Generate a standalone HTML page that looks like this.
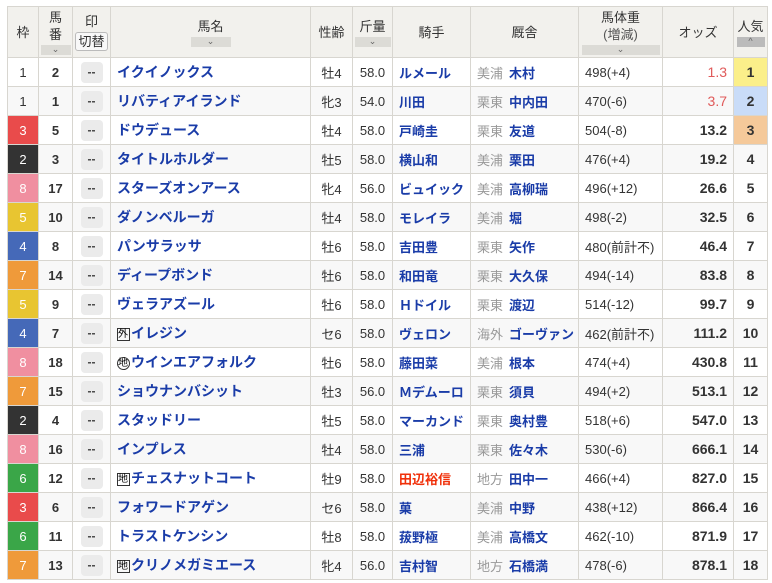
<!DOCTYPE html>
<html><head><meta charset="utf-8"><style>
body{margin:0;background:#fff;font-family:"Liberation Sans","Noto Sans CJK JP",sans-serif;}
table{position:absolute;left:7px;top:6px;border-collapse:collapse;table-layout:fixed;width:760px;font-size:13px;color:#333}
td,th{border:1px solid #d8d6d0;padding:0;height:28px;text-align:center;white-space:nowrap;overflow:hidden}
th{background:#f2f1ed;font-weight:normal;font-size:13px;height:50px;position:relative;line-height:17px}
.sort{display:block;margin:2px auto 0;height:10px;background:#dcdbd6;font-size:9px;line-height:9px;color:#666}
tr:nth-child(odd) td{background:#f8f8f8}
.w{font-weight:bold}
.mk{display:inline-block;width:22px;height:21px;background:#ebebeb;border-radius:4px;font-weight:bold;line-height:21px;font-size:12px;color:#444}
.nm{text-align:left;padding-left:6px;color:#1a3ca8;font-weight:bold;font-size:14px}
.jk{text-align:left;padding-left:6px;color:#1a3ca8;font-weight:bold}
.st{text-align:left;padding-left:6px}
.st span{color:#999;margin-right:6px}
.st b{color:#1a3ca8}
.wt{text-align:left;padding-left:6px}
.od{text-align:right;padding-right:6px;font-weight:bold;font-size:14px}
.pp{font-weight:bold;font-size:14px}
.ic{display:inline-block;border:1px solid #333;font-size:10px;line-height:11px;width:11px;color:#000;font-weight:normal;margin-right:1px;vertical-align:1px}
.ic.c{border-radius:50%}
</style></head><body>
<table>
<colgroup><col style="width:31px"><col style="width:34px"><col style="width:38px"><col style="width:200px"><col style="width:42px"><col style="width:40px"><col style="width:78px"><col style="width:108px"><col style="width:84px"><col style="width:71px"><col style="width:34px"></colgroup>
<tr><th>枠</th><th>馬<br>番<span class="sort" style="width:30px">⌄</span></th><th>印<br><span style="display:inline-block;border:1px solid #bbb;border-radius:3px;background:#f8f8f8;padding:0 2px;margin-top:2px">切替</span></th><th>馬名<span class="sort" style="width:40px">⌄</span></th><th>性齢</th><th>斤量<span class="sort" style="width:36px">⌄</span></th><th>騎手</th><th>厩舎</th><th>馬体重<br><span style="color:#555">(増減)</span><span class="sort" style="width:78px">⌄</span></th><th>オッズ</th><th>人気<span class="sort" style="width:28px;background:#bbb">^</span></th></tr>
<tr><td>1</td><td class="w">2</td><td><span class="mk">--</span></td><td class="nm">イクイノックス</td><td>牡4</td><td>58.0</td><td class="jk">ルメール</td><td class="st"><span>美浦</span><b>木村</b></td><td class="wt">498(+4)</td><td class="od" style="color:#e05a5a;font-weight:normal">1.3</td><td class="pp" style="background:#fbef8a">1</td></tr>
<tr><td>1</td><td class="w">1</td><td><span class="mk">--</span></td><td class="nm">リバティアイランド</td><td>牝3</td><td>54.0</td><td class="jk">川田</td><td class="st"><span>栗東</span><b>中内田</b></td><td class="wt">470(-6)</td><td class="od" style="color:#e05a5a;font-weight:normal">3.7</td><td class="pp" style="background:#c9dcf8">2</td></tr>
<tr><td style="background:#e94b4b;color:#fff">3</td><td class="w">5</td><td><span class="mk">--</span></td><td class="nm">ドウデュース</td><td>牡4</td><td>58.0</td><td class="jk">戸崎圭</td><td class="st"><span>栗東</span><b>友道</b></td><td class="wt">504(-8)</td><td class="od">13.2</td><td class="pp" style="background:#f5c99a">3</td></tr>
<tr><td style="background:#333;color:#fff">2</td><td class="w">3</td><td><span class="mk">--</span></td><td class="nm">タイトルホルダー</td><td>牡5</td><td>58.0</td><td class="jk">横山和</td><td class="st"><span>美浦</span><b>栗田</b></td><td class="wt">476(+4)</td><td class="od">19.2</td><td class="pp">4</td></tr>
<tr><td style="background:#f08fa0;color:#fff">8</td><td class="w">17</td><td><span class="mk">--</span></td><td class="nm">スターズオンアース</td><td>牝4</td><td>56.0</td><td class="jk">ビュイック</td><td class="st"><span>美浦</span><b>高柳瑞</b></td><td class="wt">496(+12)</td><td class="od">26.6</td><td class="pp">5</td></tr>
<tr><td style="background:#e8c531;color:#fff">5</td><td class="w">10</td><td><span class="mk">--</span></td><td class="nm">ダノンベルーガ</td><td>牡4</td><td>58.0</td><td class="jk">モレイラ</td><td class="st"><span>美浦</span><b>堀</b></td><td class="wt">498(-2)</td><td class="od">32.5</td><td class="pp">6</td></tr>
<tr><td style="background:#4569b8;color:#fff">4</td><td class="w">8</td><td><span class="mk">--</span></td><td class="nm">パンサラッサ</td><td>牡6</td><td>58.0</td><td class="jk">吉田豊</td><td class="st"><span>栗東</span><b>矢作</b></td><td class="wt">480(前計不)</td><td class="od">46.4</td><td class="pp">7</td></tr>
<tr><td style="background:#ef9a3a;color:#fff">7</td><td class="w">14</td><td><span class="mk">--</span></td><td class="nm">ディープボンド</td><td>牡6</td><td>58.0</td><td class="jk">和田竜</td><td class="st"><span>栗東</span><b>大久保</b></td><td class="wt">494(-14)</td><td class="od">83.8</td><td class="pp">8</td></tr>
<tr><td style="background:#e8c531;color:#fff">5</td><td class="w">9</td><td><span class="mk">--</span></td><td class="nm">ヴェラアズール</td><td>牡6</td><td>58.0</td><td class="jk">Ｈドイル</td><td class="st"><span>栗東</span><b>渡辺</b></td><td class="wt">514(-12)</td><td class="od">99.7</td><td class="pp">9</td></tr>
<tr><td style="background:#4569b8;color:#fff">4</td><td class="w">7</td><td><span class="mk">--</span></td><td class="nm"><span class="ic">外</span>イレジン</td><td>セ6</td><td>58.0</td><td class="jk">ヴェロン</td><td class="st"><span>海外</span><b>ゴーヴァン</b></td><td class="wt">462(前計不)</td><td class="od">111.2</td><td class="pp">10</td></tr>
<tr><td style="background:#f08fa0;color:#fff">8</td><td class="w">18</td><td><span class="mk">--</span></td><td class="nm"><span class="ic c">地</span>ウインエアフォルク</td><td>牡6</td><td>58.0</td><td class="jk">藤田菜</td><td class="st"><span>美浦</span><b>根本</b></td><td class="wt">474(+4)</td><td class="od">430.8</td><td class="pp">11</td></tr>
<tr><td style="background:#ef9a3a;color:#fff">7</td><td class="w">15</td><td><span class="mk">--</span></td><td class="nm">ショウナンバシット</td><td>牡3</td><td>56.0</td><td class="jk">Ｍデムーロ</td><td class="st"><span>栗東</span><b>須貝</b></td><td class="wt">494(+2)</td><td class="od">513.1</td><td class="pp">12</td></tr>
<tr><td style="background:#333;color:#fff">2</td><td class="w">4</td><td><span class="mk">--</span></td><td class="nm">スタッドリー</td><td>牡5</td><td>58.0</td><td class="jk">マーカンド</td><td class="st"><span>栗東</span><b>奥村豊</b></td><td class="wt">518(+6)</td><td class="od">547.0</td><td class="pp">13</td></tr>
<tr><td style="background:#f08fa0;color:#fff">8</td><td class="w">16</td><td><span class="mk">--</span></td><td class="nm">インプレス</td><td>牡4</td><td>58.0</td><td class="jk">三浦</td><td class="st"><span>栗東</span><b>佐々木</b></td><td class="wt">530(-6)</td><td class="od">666.1</td><td class="pp">14</td></tr>
<tr><td style="background:#3aa648;color:#fff">6</td><td class="w">12</td><td><span class="mk">--</span></td><td class="nm"><span class="ic">地</span>チェスナットコート</td><td>牡9</td><td>58.0</td><td class="jk" style="color:#f0300a">田辺裕信</td><td class="st"><span>地方</span><b>田中一</b></td><td class="wt">466(+4)</td><td class="od">827.0</td><td class="pp">15</td></tr>
<tr><td style="background:#e94b4b;color:#fff">3</td><td class="w">6</td><td><span class="mk">--</span></td><td class="nm">フォワードアゲン</td><td>セ6</td><td>58.0</td><td class="jk">菓</td><td class="st"><span>美浦</span><b>中野</b></td><td class="wt">438(+12)</td><td class="od">866.4</td><td class="pp">16</td></tr>
<tr><td style="background:#3aa648;color:#fff">6</td><td class="w">11</td><td><span class="mk">--</span></td><td class="nm">トラストケンシン</td><td>牡8</td><td>58.0</td><td class="jk">菝野極</td><td class="st"><span>美浦</span><b>高橋文</b></td><td class="wt">462(-10)</td><td class="od">871.9</td><td class="pp">17</td></tr>
<tr><td style="background:#ef9a3a;color:#fff">7</td><td class="w">13</td><td><span class="mk">--</span></td><td class="nm"><span class="ic">地</span>クリノメガミエース</td><td>牝4</td><td>56.0</td><td class="jk">吉村智</td><td class="st"><span>地方</span><b>石橋満</b></td><td class="wt">478(-6)</td><td class="od">878.1</td><td class="pp">18</td></tr>
</table>
</body></html>
